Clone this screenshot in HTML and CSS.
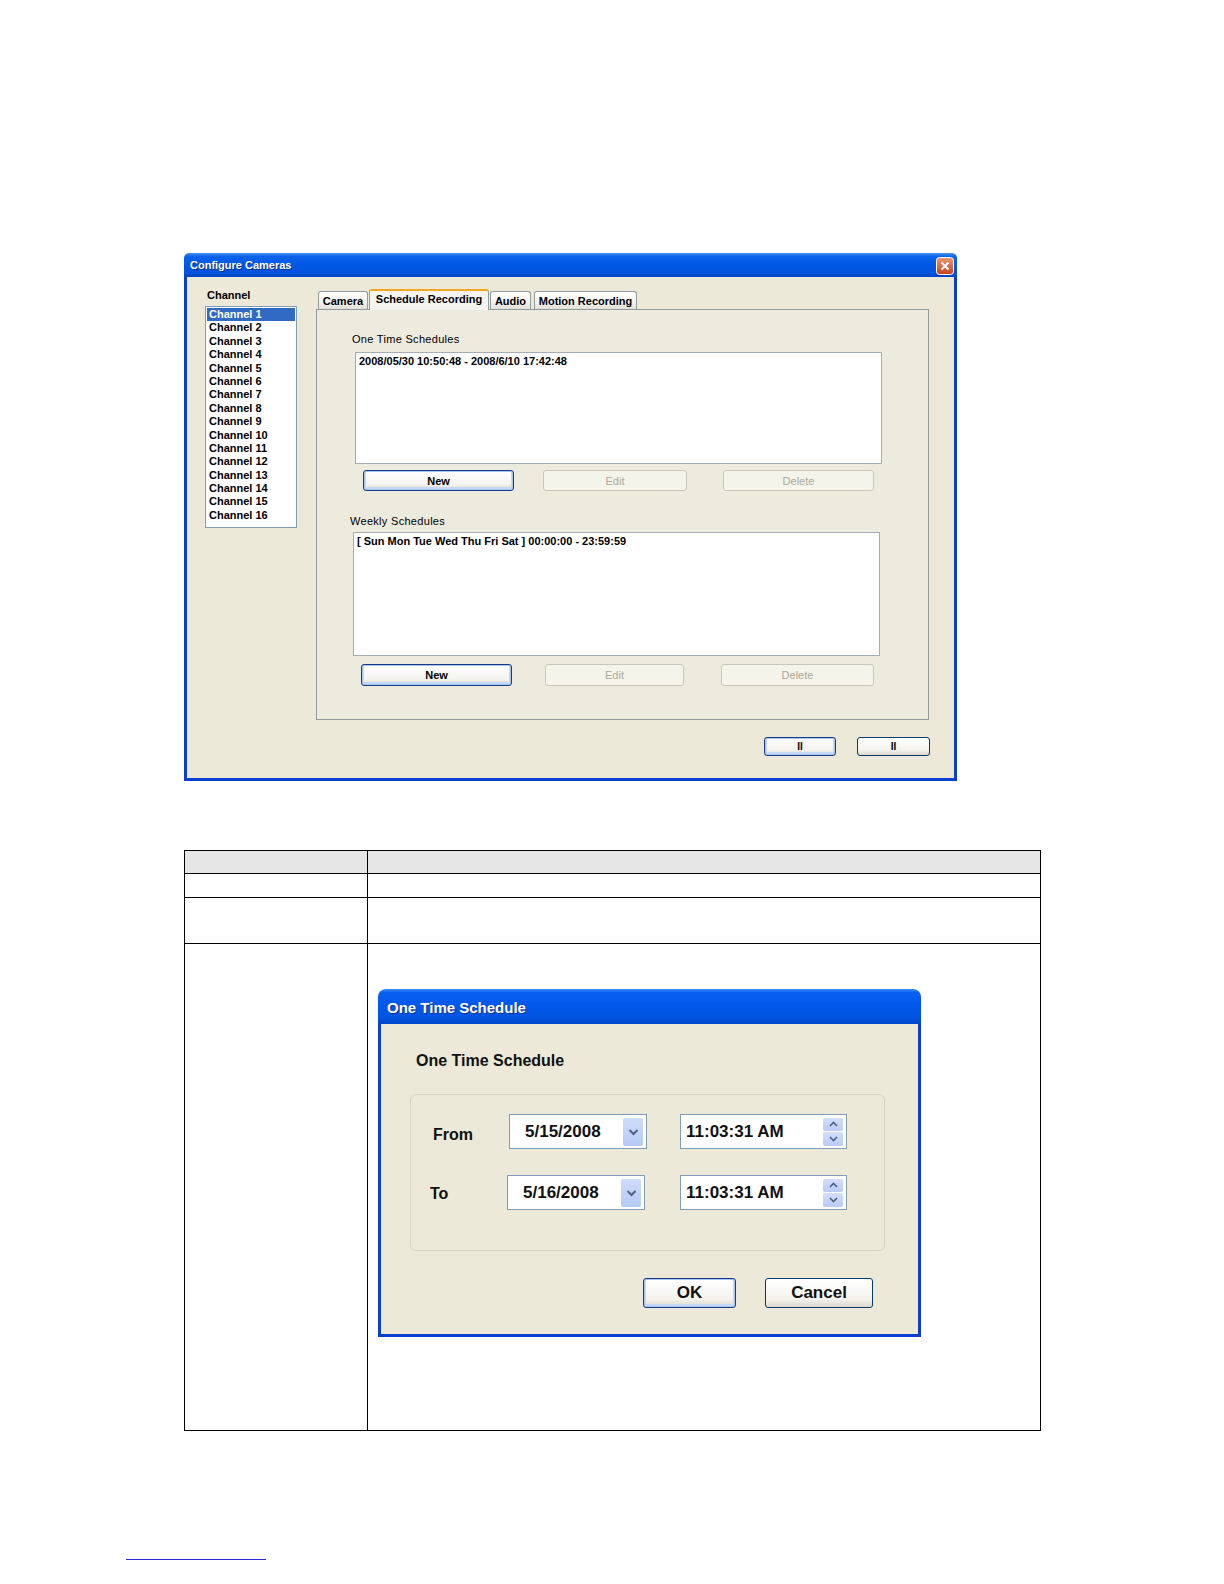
FILE: index.html
```html
<!DOCTYPE html>
<html>
<head>
<meta charset="utf-8">
<link rel="stylesheet" href="styles.css">
</head>
<body>
<div class="doc">
  <div class="win1">
    <div class="tb1">
      <span class="tb1-title">Configure Cameras</span>
      <svg class="closebtn" width="18" height="18" viewBox="0 0 18 18">
        <defs><linearGradient id="cg" x1="0" y1="0" x2="0" y2="1"><stop offset="0" stop-color="#eb9a7c"/><stop offset="1" stop-color="#c4411a"/></linearGradient></defs>
        <rect x="0.5" y="0.5" width="17" height="17" rx="3" fill="url(#cg)" stroke="#fff"/>
        <path d="M5.5 5.5 L12.5 12.5 M12.5 5.5 L5.5 12.5" stroke="#fff" stroke-width="2"/>
      </svg>
    </div>
    <div class="w1body">
      <div class="leftcol">
        <div class="chlabel">Channel</div>
        <div class="chlist">
          <div class="chitem sel">Channel 1</div>
          <div class="chitem">Channel 2</div>
          <div class="chitem">Channel 3</div>
          <div class="chitem">Channel 4</div>
          <div class="chitem">Channel 5</div>
          <div class="chitem">Channel 6</div>
          <div class="chitem">Channel 7</div>
          <div class="chitem">Channel 8</div>
          <div class="chitem">Channel 9</div>
          <div class="chitem">Channel 10</div>
          <div class="chitem">Channel 11</div>
          <div class="chitem">Channel 12</div>
          <div class="chitem">Channel 13</div>
          <div class="chitem">Channel 14</div>
          <div class="chitem">Channel 15</div>
          <div class="chitem">Channel 16</div>
        </div>
      </div>
      <div class="rightcol">
        <div class="tabs">
          <div class="tab t-cam">Camera</div>
          <div class="tab active t-sch">Schedule Recording</div>
          <div class="tab t-aud">Audio</div>
          <div class="tab t-mot">Motion Recording</div>
        </div>
        <div class="panel">
          <div class="plabel pl1">One Time Schedules</div>
          <div class="lbox lb1">2008/05/30 10:50:48 - 2008/6/10 17:42:48</div>
          <div class="brow br1">
            <div class="xbtn def b-new1">New</div>
            <div class="xbtn dis b-edit1">Edit</div>
            <div class="xbtn dis b-del1">Delete</div>
          </div>
          <div class="plabel pl2">Weekly Schedules</div>
          <div class="lbox lb2">[ Sun Mon Tue Wed Thu Fri Sat ] 00:00:00 - 23:59:59</div>
          <div class="brow br2">
            <div class="xbtn def b-new2">New</div>
            <div class="xbtn dis b-edit2">Edit</div>
            <div class="xbtn dis b-del2">Delete</div>
          </div>
        </div>
        <div class="okrow">
          <div class="xbtn def sbtn">II</div>
          <div class="xbtn sbtn">II</div>
        </div>
      </div>
    </div>
  </div>

  <table class="tbl">
    <tr class="r1"><td class="c1"></td><td class="c2"></td></tr>
    <tr class="r2"><td class="c1"></td><td class="c2"></td></tr>
    <tr class="r3"><td class="c1"></td><td class="c2"></td></tr>
    <tr class="r4"><td class="c1"></td><td class="c2">
      <div class="dlg">
        <div class="tb2">One Time Schedule</div>
        <div class="dbody">
          <div class="dhead">One Time Schedule</div>
          <div class="grp">
            <div class="frow">
              <div class="flabel fl-from">From</div>
              <div class="field datef df1"><span class="ftext">5/15/2008</span>
                <span class="ddbtn"><svg width="11" height="8" viewBox="0 0 11 8"><path d="M1.5 2 L5.5 6 L9.5 2" fill="none" stroke="#4d6185" stroke-width="2"/></svg></span>
              </div>
              <div class="field timef tf1"><span class="ftext">11:03:31 AM</span>
                <span class="spin"><span class="sp"><svg width="9" height="6" viewBox="0 0 9 6"><path d="M1 5 L4.5 1.5 L8 5" fill="none" stroke="#4d6185" stroke-width="1.6"/></svg></span><span class="sp"><svg width="9" height="6" viewBox="0 0 9 6"><path d="M1 1 L4.5 4.5 L8 1" fill="none" stroke="#4d6185" stroke-width="1.6"/></svg></span></span>
              </div>
            </div>
            <div class="frow frow2">
              <div class="flabel fl-to">To</div>
              <div class="field datef df2"><span class="ftext">5/16/2008</span>
                <span class="ddbtn"><svg width="11" height="8" viewBox="0 0 11 8"><path d="M1.5 2 L5.5 6 L9.5 2" fill="none" stroke="#4d6185" stroke-width="2"/></svg></span>
              </div>
              <div class="field timef tf2"><span class="ftext">11:03:31 AM</span>
                <span class="spin"><span class="sp"><svg width="9" height="6" viewBox="0 0 9 6"><path d="M1 5 L4.5 1.5 L8 5" fill="none" stroke="#4d6185" stroke-width="1.6"/></svg></span><span class="sp"><svg width="9" height="6" viewBox="0 0 9 6"><path d="M1 1 L4.5 4.5 L8 1" fill="none" stroke="#4d6185" stroke-width="1.6"/></svg></span></span>
              </div>
            </div>
          </div>
          <div class="drow">
            <div class="xbtn def bigbtn okb">OK</div>
            <div class="xbtn bigbtn cancelb">Cancel</div>
          </div>
        </div>
      </div>
    </td></tr>
  </table>

  <div class="footline"></div>
</div>
</body>
</html>
```
FILE: styles.css
```css
* { box-sizing: border-box; }
html { overflow: hidden; }
body {
  margin: 0;
  background: #fff;
  font-family: "Liberation Sans", Arial, sans-serif;
  color: #000;
}
.doc { padding-top: 253px; height: 1584px; overflow: hidden; }

/* ---------- window 1 ---------- */
.win1 { margin-left: 184px; width: 773px; }
.tb1 {
  height: 24px;
  border-radius: 5px 5px 0 0;
  background: linear-gradient(#4a94f4 0%, #0d63ea 14%, #0058e4 50%, #0052dc 85%, #0043c2 100%);
  display: flex;
  align-items: center;
  justify-content: space-between;
  padding: 0 3px 0 6px;
}
.tb1-title {
  color: #fff;
  font-weight: bold;
  font-size: 11px;
  text-shadow: 1px 1px 0 #0b2a8a;
}
.closebtn { display: block; margin-top: 1px; }

.w1body {
  height: 504px;
  border: 3px solid #0b3fcf;
  border-top: 0;
  background: #ece9d8;
  display: flex;
}
.leftcol { margin-left: 18px; padding-top: 12px; }
.chlabel { font-size: 11px; line-height: 13px; font-weight: bold; margin-left: 2px; }
.chlist {
  margin-top: 4px;
  width: 92px;
  height: 222px;
  background: #fff;
  border: 1px solid #7f9db9;
  padding: 1px;
}
.chitem {
  font-size: 11px;
  font-weight: bold;
  line-height: 13.4px;
  height: 13.4px;
  padding-left: 2px;
  white-space: nowrap;
}
.chitem.sel { background: #316ac5; color: #fff; }

.rightcol { margin-left: 19px; padding-top: 12px; }
.tabs {
  display: flex;
  align-items: flex-end;
  height: 21px;
  padding-left: 2px;
  margin-bottom: -1px;
}
.tab {
  height: 18px;
  margin-bottom: 1px;
  border: 1px solid #919b9c;
  border-bottom: 0;
  border-radius: 3px 3px 0 0;
  background: linear-gradient(#ffffff, #f3f2ec 60%, #e2e0d6);
  font-size: 11px;
  font-weight: bold;
  line-height: 18px;
  text-align: center;
  white-space: nowrap;
}
.tab.active {
  height: 21px;
  margin-bottom: 0;
  border-top: 2px solid #f5a623;
  background: #f4f3ee;
  line-height: 17px;
}
.t-cam { width: 50px; }
.t-sch { width: 120px; margin-left: 1px; }
.t-aud { width: 41px; margin-left: 1px; }
.t-mot { width: 103px; margin-left: 3px; }

.panel {
  width: 613px;
  height: 411px;
  border: 1px solid #919b9c;
  background: #edeade;
}
.plabel { font-size: 11px; line-height: 13px; letter-spacing: 0.3px; }
.pl1 { margin: 23px 0 0 35px; }
.pl2 { margin: 24px 0 0 33px; }
.lbox {
  background: #fff;
  border: 1px solid #a5acb2;
  font-size: 11px;
  font-weight: bold;
  line-height: 13px;
  padding: 2px 3px;
  width: 527px;
  white-space: nowrap;
}
.lb1 { margin: 6px 0 0 38px; height: 112px; }
.lb2 { margin: 4px 0 0 36px; height: 124px; }

.brow { display: flex; }
.br1 { margin-top: 6px; }
.br2 { margin-top: 8px; }
.xbtn {
  border: 1px solid #003c74;
  border-radius: 3px;
  background: linear-gradient(#ffffff, #f4f3ee 70%, #dcd8cc);
  font-size: 11px;
  font-weight: bold;
  display: flex;
  align-items: center;
  justify-content: center;
  white-space: nowrap;
}
.xbtn.def {
  border-color: #1c3a8c;
  box-shadow: inset 0 0 0 1px #a8c4f0, inset 0 -1px 0 2px #c6d8f7;
}
.xbtn.dis {
  border-color: #c9c7ba;
  background: #f5f4ea;
  color: #aca899;
  font-weight: normal;
}
.br1 .xbtn { height: 21px; }
.br2 .xbtn { height: 22px; }
.b-new1 { width: 151px; margin-left: 46px; }
.b-edit1 { width: 144px; margin-left: 29px; }
.b-del1 { width: 151px; margin-left: 36px; }
.b-new2 { width: 151px; margin-left: 44px; }
.b-edit2 { width: 139px; margin-left: 33px; }
.b-del2 { width: 153px; margin-left: 37px; }

.okrow {
  display: flex;
  justify-content: flex-end;
  gap: 21px;
  margin-top: 17px;
  margin-right: -1px;
}
.sbtn { width: 72px; height: 19px; font-size: 10px; }
.okrow .sbtn:last-child { width: 73px; }

/* ---------- table ---------- */
.tbl {
  margin: 69px 0 0 184px;
  width: 857px;
  border-collapse: collapse;
}
.tbl td { border: 1px solid #000; padding: 0; vertical-align: top; }
.tbl .c1 { width: 183px; }
.r1 td { height: 23px; background: #e6e6e6; }
.r2 td { height: 24px; }
.r3 td { height: 46px; }
.r4 td { height: 487px; }

/* ---------- dialog 2 ---------- */
.dlg { width: 543px; margin: 45px 0 0 10px; }
.tb2 {
  height: 35px;
  border-radius: 8px 8px 0 0;
  background: linear-gradient(#3d8ff8 0%, #0a5ff0 10%, #0058ea 45%, #0054e2 80%, #0046c8 100%);
  color: #fff;
  font-size: 15px;
  font-weight: bold;
  line-height: 37px;
  padding-left: 9px;
  text-shadow: 1px 1px 0 #10308c;
}
.dbody {
  height: 313px;
  border: 3px solid #0b3fcf;
  border-top: 0;
  background: #ece9d8;
  padding-top: 28px;
}
.dhead {
  font-size: 16px;
  font-weight: bold;
  line-height: 18px;
  margin-left: 35px;
  color: #111;
}
.grp {
  margin: 24px 0 0 29px;
  width: 475px;
  height: 157px;
  border: 1px solid #d6d3c4;
  border-radius: 6px;
  padding-top: 19px;
}
.frow { display: flex; align-items: center; height: 35px; }
.frow2 { margin-top: 26px; }
.flabel {
  font-size: 16px;
  font-weight: bold;
  padding-top: 6px;
  color: #111;
}
.fl-from { width: 98px; padding-left: 22px; }
.fl-to { width: 96px; padding-left: 19px; padding-top: 2px; }
.field {
  height: 35px;
  border: 1px solid #7f9db9;
  background: #fff;
  display: flex;
  align-items: center;
}
.ftext { font-size: 17px; font-weight: bold; color: #111; }
.datef { width: 138px; }
.datef .ftext { padding-left: 15px; }
.timef { width: 167px; }
.timef .ftext { padding-left: 5px; }
.tf1 { margin-left: 33px; }
.tf2 { margin-left: 35px; }
.ddbtn {
  margin: 3px 3px 3px auto;
  width: 20px;
  height: 28px;
  border-radius: 2px;
  background: linear-gradient(#cfdcfb, #b4c9f6);
  display: flex;
  align-items: center;
  justify-content: center;
}
.spin {
  margin: 3px 3px 3px auto;
  width: 20px;
  height: 28px;
  display: flex;
  flex-direction: column;
}
.sp {
  flex: 1;
  background: linear-gradient(#d3defb, #b8cbf6);
  border-radius: 2px;
  display: flex;
  align-items: center;
  justify-content: center;
}
.sp + .sp { margin-top: 1px; }

.drow {
  display: flex;
  justify-content: flex-end;
  gap: 29px;
  margin-top: 27px;
  padding-right: 45px;
}
.bigbtn { height: 30px; font-size: 17px; color: #111; }
.okb { width: 93px; }
.cancelb { width: 108px; }

.footline {
  margin: 128px 0 0 126px;
  width: 140px;
  height: 1px;
  background: #2a2ad0;
}
```
